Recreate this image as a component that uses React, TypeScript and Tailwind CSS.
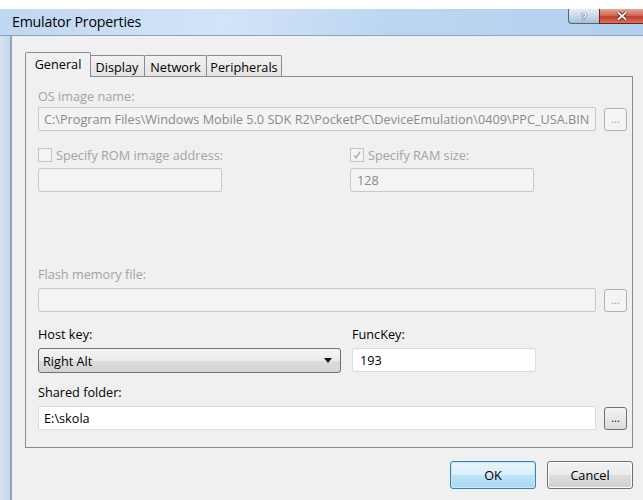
import React from "react";

function DotsButton({ enabled }: { enabled?: boolean }) {
  return (
    <div
      className={
        "w-[23px] h-[23px] shrink-0 rounded-[3px] border flex items-center justify-center text-[11px] leading-none pb-[2px] " +
        (enabled
          ? "border-[#707070] bg-[linear-gradient(180deg,#f3f3f3,#dcdcdc)] text-black"
          : "border-[#adb2b5] bg-[#f4f4f4] text-[#9a9a9a]")
      }
    >
      ...
    </div>
  );
}

function CheckBox({ checked }: { checked?: boolean }) {
  return (
    <div className="w-[14px] h-[14px] shrink-0 border border-[#c5c5c5] bg-[#f4f4f4] flex items-center justify-center">
      {checked && (
        <svg width="10" height="10" viewBox="0 0 10 10">
          <path d="M2 5.2 L4 7.8 L8.2 1.6" fill="none" stroke="#a9a9a9" strokeWidth="1.3" />
        </svg>
      )}
    </div>
  );
}

function Tab({ label, active, width }: { label: string; active?: boolean; width: string }) {
  return (
    <div
      className={
        "border border-[#898c95] border-b-0 flex items-center justify-center text-black rounded-t-[2px] " +
        width +
        (active
          ? " h-[25px] bg-[#f0f0f0] relative z-10 -mb-px -mr-[1px]"
          : " h-[21px] bg-[linear-gradient(180deg,#f2f2f2,#e3e3e3)] -ml-px")
      }
    >
      <span className={active ? "pb-[2px]" : "pt-[1px]"}>{label}</span>
    </div>
  );
}

export default function App() {
  return (
    <div className="w-[643px] h-[500px] bg-white overflow-hidden flex flex-col font-['Open_Sans',sans-serif] text-[12.7px] leading-[16px]">
      <div className="h-[9px] shrink-0 bg-white" />

      {/* caption bar */}
      <div className="h-[27px] shrink-0 flex items-start bg-[#c4daf3] bg-[linear-gradient(100deg,#c0d7f1_0%,#d2e4f8_35%,#bcd6f2_60%,#b3cfee_100%)] border-b border-[#8aa3c0]">
        <span className="ml-[12px] mt-[3px] text-[14.2px] leading-[20px] text-black tracking-[-0.2px]">
          Emulator Properties
        </span>
        <div className="ml-auto flex h-[15px]">
          <div className="w-[31px] h-[15px] rounded-bl-[4px] border-l border-b border-[#51647d] bg-[#bccee3] bg-[linear-gradient(180deg,#e4edf7_0%,#c9d8ea_50%,#a9bfd8_100%)] flex items-center justify-center">
            <span className="text-[11px] leading-none font-bold text-white [text-shadow:0_0_1px_#2f3d50,0_0_1px_#2f3d50]">?</span>
          </div>
          <div className="w-[44px] h-[15px] border-l border-b border-[#6e2219] bg-[#c8473a] bg-[linear-gradient(180deg,#e8a796_0%,#d26656_45%,#c13b2b_55%,#d8735a_100%)] flex items-center justify-center">
            <svg width="12" height="10" viewBox="0 0 12 10">
              <path d="M2 1.5 L10 8.5 M10 1.5 L2 8.5" stroke="#5a1a14" strokeWidth="3.4" />
              <path d="M2 1.5 L10 8.5 M10 1.5 L2 8.5" stroke="#ffffff" strokeWidth="1.8" />
            </svg>
          </div>
        </div>
      </div>

      <div className="flex-1 flex min-h-0">
        {/* window frame */}
        <div className="w-[12px] shrink-0 bg-[linear-gradient(90deg,#d5e3f4,#c6d8ee)] border-r-[2px] border-[#8ea4bf]" />

        {/* client area */}
        <div className="flex-1 bg-[#f0f0f0] flex flex-col pl-[13px] pr-[10px] pt-[16px]">
          {/* tab strip */}
          <div className="flex items-end h-[24px]">
            <Tab label="General" active width="w-[66px]" />
            <Tab label="Display" width="w-[56px]" />
            <Tab label="Network" width="w-[63px]" />
            <Tab label="Peripherals" width="w-[76px]" />
          </div>

          {/* tab page */}
          <div className="h-[372px] border border-[#898c95] bg-[#f0f0f0] pl-[12px] pr-[5px] pt-[11px] flex flex-col">
            <div className="text-[#a3a3a3]">OS image name:</div>
            <div className="mt-[3px] flex items-center gap-[8px]">
              <div className="flex-1 h-[24px] border border-[#c8c8c8] rounded-[2px] bg-[#f4f4f4] px-[5px] flex items-center text-[#8a8a8a] whitespace-nowrap overflow-hidden">
                C:\Program Files\Windows Mobile 5.0 SDK R2\PocketPC\DeviceEmulation\0409\PPC_USA.BIN
              </div>
              <DotsButton />
            </div>

            <div className="mt-[16px] grid grid-cols-[312px_1fr]">
              <div className="flex flex-col">
                <div className="flex items-center gap-[4px] text-[#a3a3a3]">
                  <CheckBox />
                  <span>Specify ROM image address:</span>
                </div>
                <div className="mt-[5px] w-[184px] h-[24px] border border-[#c8c8c8] rounded-[2px] bg-[#f4f4f4]" />
              </div>
              <div className="flex flex-col">
                <div className="flex items-center gap-[4px] text-[#a3a3a3]">
                  <CheckBox checked />
                  <span>Specify RAM size:</span>
                </div>
                <div className="mt-[5px] w-[184px] h-[24px] border border-[#c8c8c8] rounded-[2px] bg-[#f4f4f4] px-[6px] flex items-center text-[#8a8a8a]">
                  128
                </div>
              </div>
            </div>

            <div className="mt-[74px] text-[#a3a3a3]">Flash memory file:</div>
            <div className="mt-[6px] flex items-center gap-[8px]">
              <div className="flex-1 h-[24px] border border-[#c8c8c8] rounded-[2px] bg-[#f4f4f4]" />
              <DotsButton />
            </div>

            <div className="mt-[14px] grid grid-cols-[314px_1fr]">
              <div className="flex flex-col">
                <div className="text-black">Host key:</div>
                <div className="mt-[6px] w-[303px] h-[25px] border border-[#707070] rounded-[3px] bg-[linear-gradient(180deg,#f4f4f4_0%,#ebebeb_50%,#dddddd_51%,#d3d3d3_100%)] pl-[4px] pr-[8px] flex items-center text-black">
                  <span className="flex-1">Right Alt</span>
                  <svg width="8" height="5" viewBox="0 0 8 5">
                    <path d="M0 0 H8 L4 5 Z" fill="#111" />
                  </svg>
                </div>
              </div>
              <div className="flex flex-col">
                <div className="text-black">FuncKey:</div>
                <div className="mt-[6px] w-[184px] h-[24px] border border-[#dcdcdc] rounded-[2px] bg-white px-[7px] flex items-center text-black">
                  193
                </div>
              </div>
            </div>

            <div className="mt-[11px] text-black">Shared folder:</div>
            <div className="mt-[6px] flex items-center gap-[8px]">
              <div className="flex-1 h-[24px] border border-[#dcdcdc] rounded-[2px] bg-white px-[5px] flex items-center text-black">
                E:\skola
              </div>
              <DotsButton enabled />
            </div>
          </div>

          {/* dialog buttons */}
          <div className="mt-[13px] flex justify-end gap-[11px]">
            <div className="w-[86px] h-[28px] rounded-[3px] border border-[#3c7fb1] bg-[linear-gradient(180deg,#e9f5fd_0%,#d9effa_50%,#bee3f6_51%,#a7d9f5_100%)] shadow-[inset_0_0_0_1px_#c3ebfc] flex items-center justify-center text-black">
              OK
            </div>
            <div className="w-[86px] h-[28px] rounded-[3px] border border-[#707070] bg-[linear-gradient(180deg,#f2f2f2_0%,#ebebeb_50%,#dddddd_51%,#cfcfcf_100%)] shadow-[inset_0_0_0_1px_#fbfbfb] flex items-center justify-center text-black">
              Cancel
            </div>
          </div>
        </div>
      </div>
    </div>
  );
}
